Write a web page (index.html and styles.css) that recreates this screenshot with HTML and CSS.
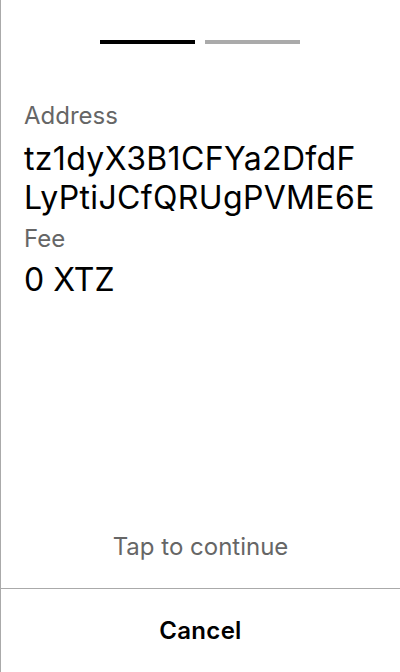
FILE: index.html
```html
<!DOCTYPE html>
<html>
<head>
<meta charset="utf-8">
<link rel="stylesheet" href="styles.css">
</head>
<body>
<div class="screen">
  <div class="progress">
    <div class="bar bar-active"></div>
    <div class="bar bar-inactive"></div>
  </div>
  <div class="content">
    <div class="label">Address</div>
    <div class="value address">tz1dyX3B1CFYa2DfdF LyPtiJCfQRUgPVME6E</div>
    <div class="label">Fee</div>
    <div class="value fee">0 XTZ</div>
  </div>
  <div class="tap">Tap to continue</div>
  <div class="cancel">Cancel</div>
</div>
</body>
</html>
```
FILE: styles.css
```css
html, body {
  margin: 0;
  padding: 0;
  background: #fff;
}
.screen {
  box-sizing: border-box;
  width: 400px;
  height: 672px;
  border-left: 1px solid #aaaaaa;
  display: flex;
  flex-direction: column;
  font-family: Inter, "Noto Sans", sans-serif;
}
.progress {
  display: flex;
  justify-content: center;
  gap: 10px;
  padding-top: 40px;
  margin-left: -1px;
}
.bar {
  width: 95px;
  height: 4px;
}
.bar-active { background: #000; }
.bar-inactive { background: #aaaaaa; }
.content {
  padding: 57px 20px 0 23px;
  flex: 1;
}
.label {
  font-size: 24px;
  line-height: 30px;
  color: #666666;
  margin-bottom: 8px;
}
.value {
  font-size: 32px;
  line-height: 39px;
  color: #000;
}
.address {
  margin-bottom: 7px;
  letter-spacing: 0.35px;
}
.fee {
  margin-top: -2px;
}
.tap {
  text-align: center;
  font-size: 24px;
  line-height: 30px;
  color: #666666;
  padding-bottom: 26px;
}
.cancel {
  border-top: 1px solid #aaaaaa;
  height: 83px;
  display: flex;
  align-items: center;
  justify-content: center;
  font-size: 24px;
  font-weight: 600;
  letter-spacing: 0.3px;
  color: #000;
}
```
